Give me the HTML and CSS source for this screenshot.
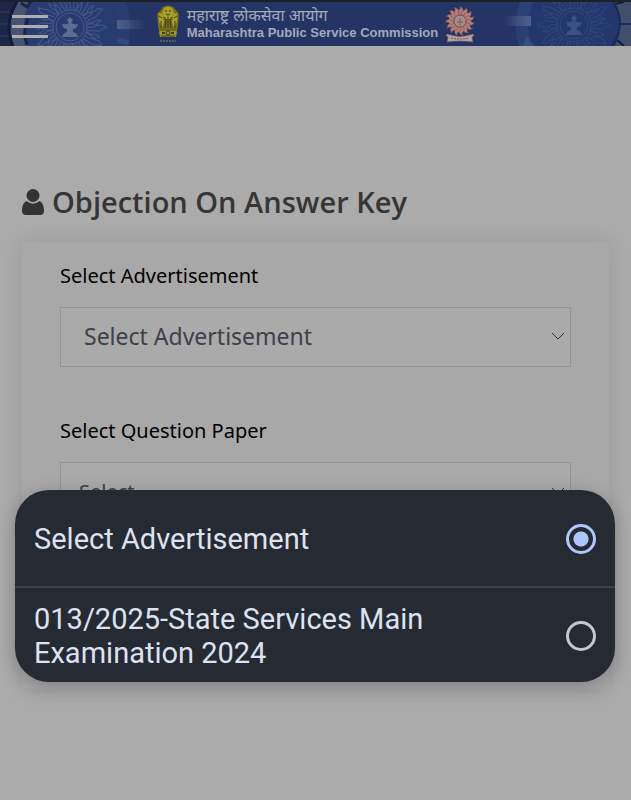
FILE: index.html
```html
<!DOCTYPE html>
<html lang="en">
<head>
<meta charset="utf-8">
<meta name="viewport" content="width=device-width, initial-scale=1">
<title>Objection On Answer Key</title>
<link rel="stylesheet" href="styles.css">
</head>
<body>
<svg class="defs" aria-hidden="true">
  <defs>
    <path id="ray" d="M-3-17C-7-22 1-25-2-30Q-3-34 1-37C0-33 5-31 4-26Q3-22 4-17"/>
    <path id="ray-small" d="M6-16Q9-20 7-24Q7-28 10-30Q9-26 12-23Q12-19 9-15"/>
    <g id="ray-quarter">
      <use href="#ray"/><use href="#ray-small"/>
      <use href="#ray" transform="rotate(30)"/><use href="#ray-small" transform="rotate(30)"/>
      <use href="#ray" transform="rotate(60)"/><use href="#ray-small" transform="rotate(60)"/>
    </g>
    <g id="sun">
      <use href="#ray-quarter"/>
      <use href="#ray-quarter" transform="rotate(90)"/>
      <use href="#ray-quarter" transform="rotate(180)"/>
      <use href="#ray-quarter" transform="rotate(270)"/>
      <circle r="17"/><circle r="14"/>
    </g>
    <path id="flame" d="M-1-6Q-4-9-1-11Q1-12 0-15Q4-12 3-10Q1-8 2-6Z"/>
    <g id="flame-third">
      <use href="#flame"/>
      <use href="#flame" transform="rotate(24)"/>
      <use href="#flame" transform="rotate(48)"/>
      <use href="#flame" transform="rotate(72)"/>
      <use href="#flame" transform="rotate(96)"/>
    </g>
    <path id="lamp" d="M0-10L3-7L1-4Q4-2 8-3Q7 2 3 2V5Q7 6 8 10H-8Q-7 6-3 5V2Q-7 2-8-3Q-4-2-1-4L-3-7Z"/>
    <linearGradient id="beam-left"><stop offset="0" stop-color="#4d5e8a"/><stop offset="1" stop-color="#4d5e8a" stop-opacity="0"/></linearGradient>
    <linearGradient id="beam-right"><stop offset="0" stop-color="#4d5f8d" stop-opacity="0"/><stop offset="1" stop-color="#4d5f8d"/></linearGradient>
  </defs>
</svg>

<header class="topbar">
  <svg class="ornament ornament-left" viewBox="0 0 150 46" aria-hidden="true">
    <path d="M0 0H17Q4 23 14 46H0Z" fill="#1c2748"/>
    <path d="M0 12H10M0 24H8M0 36H10" stroke="#303c63"/>
    <circle cx="70" cy="25" r="53" fill="none" stroke="#293d72" stroke-width="14"/>
    <path d="M18 0H38Q18 22 29 46H13Q3 23 18 0Z" fill="#485373"/>
    <circle cx="70" cy="25" r="46" fill="#283c72"/>
    <path d="M18 0Q3 23 13 46" fill="none" stroke="#111b3c" stroke-width="3"/>
    <path d="M21 3L27 7L32 0M27 45Q22 32 28 19" fill="none" stroke="#17244c" stroke-width="3"/>
    <path d="M118 40L129 43" stroke="#304a7c" stroke-width="5"/>
    <path d="M117 20H145V29H117Z" fill="url(#beam-left)"/>
    <g transform="translate(70 27)">
      <use href="#sun" fill="none" stroke="#485a88"/>
      <use href="#lamp" fill="#5f6d93"/>
    </g>
  </svg>

  <button class="menu" type="button" aria-label="Open menu"><span></span><span></span><span></span></button>

  <div class="brand">
    <svg class="emblem" viewBox="0 0 24 38" aria-hidden="true">
      <path d="M4 32L2 20L1 9L5 5L7 2Q12-1 17 2L20 5L23 9L22 20L20 32Z" fill="#756f20"/>
      <path d="M8 3Q12 0 16 3L18 8L15 14H9L6 8ZM3 8L7 9L8 17L6 23L3 17ZM21 8L17 9L16 17L18 23L21 17Z" fill="#a89f27"/>
      <path d="M9 6H11M13 6H15M10 9Q12 11 14 9M8 12L10 15L9 23M16 12L14 15L15 23M12 12V23M3 11L6 13M21 11L18 13M5 16V23M19 16V23" fill="none" stroke="#413d1a"/>
      <path d="M3 24H21L20 32H4Z" fill="#9c9427"/>
      <path d="M3 25H21M5 31H19" stroke="#474219"/>
      <circle cx="12" cy="28" r="2" fill="none" stroke="#474219"/>
      <path d="M6 28H9M15 28H18" stroke="#474219" stroke-width="2"/>
      <path d="M4 36H20" stroke="#8a8444" stroke-dasharray="2 1"/>
    </svg>
    <div class="brand-text">
      <span class="brand-mr" lang="mr">महाराष्ट्र लोकसेवा आयोग</span>
      <span class="brand-en">Maharashtra Public Service Commission</span>
    </div>
    <svg class="seal" viewBox="-15 -15 30 37" aria-hidden="true">
      <g fill="#b08078" stroke="#7d3f48" stroke-width=".4">
        <use href="#flame-third"/>
        <use href="#flame-third" transform="rotate(120)"/>
        <use href="#flame-third" transform="rotate(240)"/>
      </g>
      <circle r="6" fill="#9b9096" stroke="#8a5055"/>
      <path d="M0-4L1-2V0H3V2H1V4H-1V2H-3V0H-1V-2Z" fill="#9d6a50"/>
      <path d="M-14 13L-9 14Q0 17 9 14L14 13L12 17L13 21Q0 19-13 21L-12 17Z" fill="#aba4a6" stroke="#934e4a" stroke-width=".6"/>
      <path d="M-9 17Q0 19 9 17" fill="none" stroke="#6c555e" stroke-dasharray="2 1"/>
    </svg>
  </div>

  <svg class="ornament ornament-right" viewBox="0 0 131 46" aria-hidden="true">
    <circle cx="74" cy="25" r="52" fill="none" stroke="#2a3f74" stroke-width="13"/>
    <path d="M112 0H131V46H112Q128 23 112 0Z" fill="#434e6a"/>
    <path d="M115 4L124 2M117 40L124 46" stroke="#111c3e" stroke-width="2"/>
    <path d="M120 24H131" stroke="#172c65" stroke-width="2"/>
    <circle cx="74" cy="25" r="46" fill="#23376c"/>
    <path d="M112 0Q128 23 112 46" fill="none" stroke="#1a2a59" stroke-width="2"/>
    <path d="M23 46L27 36L34 46Z" fill="#31507e"/>
    <path d="M3 16H31V26H3Z" fill="url(#beam-right)"/>
    <g transform="translate(74 25)">
      <use href="#sun" fill="none" stroke="#32467a"/>
      <use href="#lamp" fill="#3c5082"/>
    </g>
  </svg>
</header>

<main class="page">
  <h1 class="title">
    <svg class="user-icon" viewBox="0 0 22 26" aria-hidden="true"><circle cx="11" cy="6.5" r="6.5"/><path d="M5 12Q11 17 17 12C21 13 22 18 22 22Q22 26 18 26H4Q0 26 0 22C0 18 1 13 5 12Z"/><path class="neck" d="M4.500 11.500Q11 16.500 17.500 11.500"/></svg>
    <span>Objection On Answer Key</span>
  </h1>
  <form class="card">
    <div class="field">
      <label for="advertisement">Select Advertisement</label>
      <div class="select-wrap">
        <select id="advertisement" class="select-large"><option>Select Advertisement</option><option>013/2025-State Services Main Examination 2024</option></select>
        <svg class="chevron" viewBox="0 0 14 8" aria-hidden="true"><path d="M1 1L7 7L13 1"/></svg>
      </div>
    </div>
    <div class="field">
      <label for="paper">Select Question Paper</label>
      <div class="select-wrap">
        <select id="paper"><option>Select</option></select>
        <svg class="chevron" viewBox="0 0 14 8" aria-hidden="true"><path d="M1 1L7 7L13 1"/></svg>
      </div>
    </div>
  </form>
</main>

<div class="picker" role="dialog" aria-label="Select Advertisement">
  <label class="choice"><span>Select Advertisement</span><input type="radio" name="choice" checked></label>
  <label class="choice"><span>013/2025-State Services Main Examination 2024</span><input type="radio" name="choice"></label>
</div>
</body>
</html>
```
FILE: styles.css
```css
* {
  box-sizing: border-box;
}

body {
  margin: 0;
  min-height: 100vh;
  background: #ababab;
  color: #000;
  font-family: "Open Sans", "Noto Sans", sans-serif;
}

.defs {
  position: absolute;
  width: 0;
  height: 0;
}

.topbar {
  position: relative;
  display: flex;
  align-items: center;
  justify-content: center;
  height: 46px;
  overflow: hidden;
  border-top: 2px solid #1c2029;
  background: #243565;
}

.ornament {
  position: absolute;
  top: -2px;
  height: 46px;
}

.ornament-left {
  left: 0;
  width: 150px;
}

.ornament-right {
  right: 0;
  width: 131px;
}

.menu {
  position: absolute;
  top: 13px;
  left: 12px;
  display: grid;
  gap: 7px;
  width: 36px;
  padding: 0;
  border: 0;
  background: none;
}

.menu span {
  height: 3px;
  background: #adadad;
}

.brand {
  position: relative;
  display: flex;
  align-items: center;
  gap: 7px;
}

.emblem {
  width: 24px;
  height: 38px;
}

.brand-text {
  display: flex;
  flex-direction: column;
  padding-bottom: 2px;
  color: #a3a9ba;
  white-space: nowrap;
}

.brand-mr {
  font-size: 16px;
  line-height: 20px;
}

.brand-en {
  font: bold 13px/16px "Liberation Sans", Arial, sans-serif;
}

.seal {
  width: 30px;
  height: 37px;
}

.page {
  padding: 134px 22px 0;
}

.title {
  display: flex;
  align-items: center;
  gap: 8px;
  margin: 0 0 18px;
  color: #363636;
  font-size: 29px;
  font-weight: 600;
  line-height: 44px;
}

.user-icon {
  width: 22px;
  height: 26px;
  fill: #333;
}

.neck {
  fill: none;
  stroke: #ababab;
}

.card {
  display: grid;
  gap: 48px;
  min-height: 447px;
  padding: 18px 38px;
  align-content: start;
  background: #a8a8a8;
  box-shadow: 0 0 20px rgba(0, 0, 0, 0.1);
}

.field {
  display: grid;
  gap: 16px;
}

.field label {
  font-family: "Noto Sans", sans-serif;
  font-size: 20px;
  line-height: 31px;
}

.select-wrap {
  position: relative;
}

select {
  width: 100%;
  height: 60px;
  padding: 0 40px 2px 18px;
  appearance: none;
  border: 1px solid #939393;
  border-radius: 0;
  background: #aaa;
  color: #40404a;
  font: 20px "Noto Sans", sans-serif;
}

.select-large {
  padding-left: 23px;
  font-size: 23px;
}

.chevron {
  position: absolute;
  top: 25px;
  right: 6px;
  width: 14px;
  height: 8px;
  fill: none;
  stroke: #333;
  pointer-events: none;
}

.picker {
  position: absolute;
  top: 490px;
  right: 16px;
  left: 15px;
  overflow: hidden;
  border-radius: 34px;
  background: #262a33;
  box-shadow: 0 4px 18px rgba(0, 0, 0, 0.24);
  color: #dce2f1;
  font: 29px/34px Roboto, sans-serif;
}

.choice {
  display: flex;
  align-items: center;
  justify-content: space-between;
  gap: 90px;
  min-height: 96px;
  padding: 13px 19px 11px;
}

.choice + .choice {
  border-top: 2px solid #3c4049;
}

.choice input {
  flex: none;
  width: 30px;
  height: 30px;
  margin: 0;
  appearance: none;
  border: 3px solid #c4c7d2;
  border-radius: 50%;
}

.choice input:checked {
  border-color: #afc6fb;
  background: radial-gradient(circle, #afc6fb 7px, transparent 8px);
}
```
